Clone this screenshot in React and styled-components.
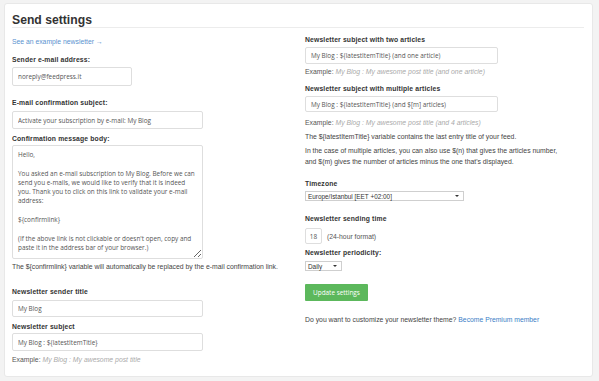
import React from "react";
import styled, { createGlobalStyle } from "styled-components";

const GlobalStyle = createGlobalStyle`
  html, body {
    margin: 0;
    background: #f3f3f3;
    font-family: "Liberation Sans", Arial, sans-serif;
  }
`;

const Page = styled.div`
  padding: 3px 6px 6px 4px;
`;

const Panel = styled.div`
  background: #fff;
  border: 1px solid #e8e8e8;
  border-radius: 3px;
  padding: 0 7px 11px 7px;
`;

const Header = styled.div`
  height: 23px;
  border-bottom: 1px solid #ececec;
  display: flex;
  align-items: center;
  margin-right: 1px;
`;

const Title = styled.h2`
  margin: 0;
  padding-top: 8px;
  font-size: 12.2px;
  font-weight: bold;
  color: #333;
  line-height: 14px;
`;

const Columns = styled.div`
  display: grid;
  grid-template-columns: 293px 1fr;
`;

const Column = styled.div`
  display: flex;
  flex-direction: column;
  align-items: flex-start;
`;

const Link = styled.a`
  margin-top: ${({ $mt }) => $mt || 0}px;
  font-size: 6.8px;
  line-height: 10px;
  color: ${({ $color }) => $color || "#5b93cf"};
  text-decoration: none;
`;

const Label = styled.div`
  margin-top: ${({ $mt }) => $mt}px;
  font-size: 6.8px;
  line-height: 10px;
  font-weight: bold;
  color: #333;
  letter-spacing: 0.15px;
`;

const Input = styled.input`
  box-sizing: border-box;
  margin-top: ${({ $mt }) => $mt || 0}px;
  width: ${({ $w }) => $w}px;
  height: ${({ $h }) => $h}px;
  border: 1px solid #dedede;
  border-radius: 2px;
  padding: 0 ${({ $pad }) => ($pad === undefined ? 5 : $pad)}px;
  font-family: "Open Sans", sans-serif;
  font-size: 6.4px;
  color: #555;
  background: #fff;
  outline: none;
  text-align: ${({ $center }) => ($center ? "center" : "left")};
`;

const TextArea = styled.textarea`
  box-sizing: border-box;
  margin-top: ${({ $mt }) => $mt}px;
  width: 191px;
  height: 114px;
  border: 1px solid #dedede;
  border-radius: 2px;
  padding: 4px 5px;
  font-family: "Open Sans", sans-serif;
  font-size: 6.4px;
  line-height: 9.3px;
  color: #555;
  resize: vertical;
  overflow: hidden;
  white-space: pre;
  outline: none;
`;

const Text = styled.div`
  margin-top: ${({ $mt }) => $mt}px;
  font-size: 6.85px;
  line-height: ${({ $lh }) => $lh || 10}px;
  color: #444;
`;

const Example = styled(Text)`
  color: #555;
  em {
    color: #aaa;
  }
`;

const Select = styled.div`
  box-sizing: border-box;
  margin-top: ${({ $mt }) => $mt}px;
  width: ${({ $w }) => $w}px;
  height: 10px;
  border: 1px solid #cfcfcf;
  display: flex;
  align-items: center;
  justify-content: space-between;
  padding: 0 4px 0 2px;
  font-size: 6.4px;
  color: #333;
  background: #fff;
`;

const Caret = styled.span`
  width: 0;
  height: 0;
  border-left: 2px solid transparent;
  border-right: 2px solid transparent;
  border-top: 2.5px solid #333;
`;

const Row = styled.div`
  margin-top: ${({ $mt }) => $mt}px;
  display: flex;
  align-items: center;
  gap: 5px;
`;

const Hint = styled.span`
  font-size: 6.8px;
  color: #555;
`;

const Button = styled.button`
  margin-top: ${({ $mt }) => $mt}px;
  width: 63px;
  height: 17px;
  border: none;
  border-radius: 1px;
  background: #5cb85c;
  color: #fff;
  font-family: "Open Sans", sans-serif;
  font-size: 6.4px;
  padding: 0;
  cursor: pointer;
`;

const body = `Hello,

You asked an e-mail subscription to My Blog. Before we can
send you e-mails, we would like to verify that it is indeed
you. Thank you to click on this link to validate your e-mail
address:

\${confirmlink}

(If the above link is not clickable or doesn't open, copy and
paste it in the address bar of your browser.)`;

export default function App() {
  return (
    <>
      <GlobalStyle />
      <Page>
        <Panel>
          <Header>
            <Title>Send settings</Title>
          </Header>
          <Columns>
            <Column>
              <Link $mt={9} href="#">See an example newsletter →</Link>
              <Label $mt={8}>Sender e-mail address:</Label>
              <Input $mt={2} $w={120} $h={19} defaultValue="noreply@feedpress.it" />
              <Label $mt={12}>E-mail confirmation subject:</Label>
              <Input $mt={3} $w={191} $h={18} defaultValue="Activate your subscription by e-mail: My Blog" />
              <Label $mt={5}>Confirmation message body:</Label>
              <TextArea $mt={1} wrap="off" defaultValue={body} />
              <Text $mt={3}>The ${"{confirmlink}"} variable will automatically be replaced by the e-mail confirmation link.</Text>
              <Label $mt={15}>Newsletter sender title</Label>
              <Input $mt={3} $w={191} $h={17} defaultValue="My Blog" />
              <Label $mt={5}>Newsletter subject</Label>
              <Input $mt={1} $w={191} $h={18} defaultValue="My Blog : ${latestItemTitle}" />
              <Example $mt={4}>Example: <em>My Blog : My awesome post title</em></Example>
            </Column>
            <Column>
              <Label $mt={7}>Newsletter subject with two articles</Label>
              <Input $mt={2} $w={193} $h={17} defaultValue="My Blog : ${latestItemTitle} (and one article)" />
              <Example $mt={3}>Example: <em>My Blog : My awesome post title (and one article)</em></Example>
              <Label $mt={7}>Newsletter subject with multiple articles</Label>
              <Input $mt={2} $w={193} $h={16} defaultValue="My Blog : ${latestItemTitle} (and $[m] articles)" />
              <Example $mt={6}>Example: <em>My Blog : My awesome post title (and 4 articles)</em></Example>
              <Text $mt={4}>The ${"{latestItemTitle}"} variable contains the last entry title of your feed.</Text>
              <Text $mt={3} $lh={11}>
                In the case of multiple articles, you can also use $(n) that gives the articles number,
                <br />
                and $(m) gives the number of articles minus the one that's displayed.
              </Text>
              <Label $mt={12}>Timezone</Label>
              <Select $mt={2} $w={159}>
                <span>Europe/Istanbul [EET +02:00]</span>
                <Caret />
              </Select>
              <Label $mt={13}>Newsletter sending time</Label>
              <Row $mt={4}>
                <Input $w={17} $h={16} $pad={0} $center defaultValue="18" />
                <Hint>(24-hour format)</Hint>
              </Row>
              <Label $mt={4}>Newsletter periodicity:</Label>
              <Select $mt={3} $w={37}>
                <span>Daily</span>
                <Caret />
              </Select>
              <Button $mt={13}>Update settings</Button>
              <Text $mt={14}>
                Do you want to customize your newsletter theme?{" "}
                <Link href="#" $color="#3b80c6">Become Premium member</Link>
              </Text>
            </Column>
          </Columns>
        </Panel>
      </Page>
    </>
  );
}
